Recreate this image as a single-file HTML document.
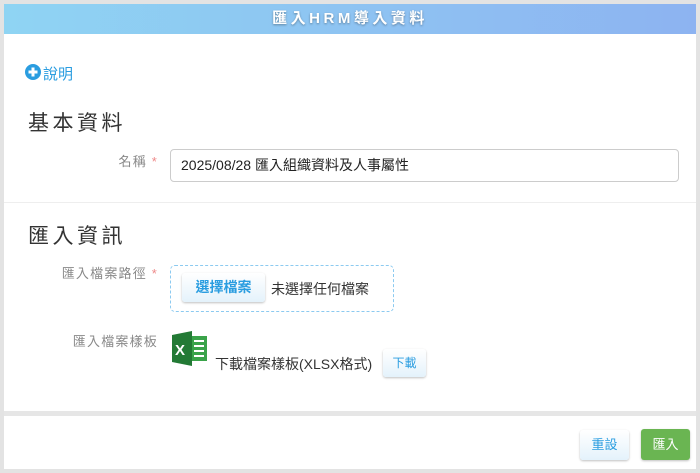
<!DOCTYPE html><html><head><meta charset="utf-8"><style>
body{margin:0;width:700px;height:473px;background:#e3e3e3;font-family:"Liberation Sans","Noto Sans CJK TC",sans-serif;position:relative;overflow:hidden}
.p{position:absolute}
#hd{left:4px;top:4px;width:692px;height:30px;background:linear-gradient(90deg,#8fd4f3,#8db3f1);color:#fff;font-weight:bold;font-size:15px;letter-spacing:3.5px;text-align:center;line-height:30px;text-shadow:0 1px 2px rgba(0,0,0,.35)}
#body{left:4px;top:34px;width:692px;height:377px;background:#fff}
#ft{left:4px;top:416px;width:692px;height:53px;background:#fff}
.lbl{color:#888;font-size:13px;letter-spacing:1.2px;text-align:right;width:154px;left:4px}
.star{color:#e88}
h2{margin:0;font-weight:normal;font-size:21px;letter-spacing:3.5px;color:#333;position:absolute;left:28px}
.btn{position:absolute;border-radius:3px;box-shadow:0 1px 2px rgba(0,0,0,.25);font-size:13px;text-align:center;background:linear-gradient(#fff,#e4f2fb);color:#2a9de0}
</style></head><body>
<div class="p" id="hd">匯入HRM導入資料</div>
<div class="p" id="body"></div>
<div class="p" style="left:4px;top:411px;width:692px;height:5px;background:#e6e6e6"></div>
<div class="p" id="ft"></div>
<svg class="p" style="left:25px;top:64px" width="16" height="16"><circle cx="8" cy="8" r="8" fill="#2a9de0"/><rect x="3.5" y="6.5" width="9" height="3" fill="#fff"/><rect x="6.5" y="3.5" width="3" height="9" fill="#fff"/></svg>
<div class="p" style="left:43px;top:63px;font-size:15px;color:#2a9de0">說明</div>
<h2 style="top:107px">基本資料</h2>
<div class="p lbl" style="top:151px">名稱 <span class="star">*</span></div>
<div class="p" style="left:170px;top:149px;border:1px solid #ccc;border-radius:4px;font-size:14px;line-height:31px;padding-left:10px;box-sizing:border-box;width:509px;height:33px;color:#222">2025/08/28 匯入組織資料及人事屬性</div>
<div class="p" style="left:4px;top:202px;width:692px;height:1px;background:#eee"></div>
<h2 style="top:220px">匯入資訊</h2>
<div class="p lbl" style="top:263px">匯入檔案路徑 <span class="star">*</span></div>
<div class="p" style="left:170px;top:265px;width:224px;height:47px;border:1px dashed #8ccaf0;border-radius:5px;box-sizing:border-box"></div>
<div class="btn" style="left:182px;top:273px;width:83px;height:29px;line-height:29px;font-weight:bold;font-size:14px">選擇檔案</div>
<div class="p" style="left:271px;top:279px;font-size:14px;color:#333">未選擇任何檔案</div>
<div class="p lbl" style="top:331px">匯入檔案樣板</div>
<svg class="p" style="left:172px;top:331px" width="36" height="35"><rect x="14" y="5" width="21" height="25" fill="#3aa34a"/><g fill="#fff"><rect x="22" y="9" width="10" height="2"/><rect x="22" y="14" width="10" height="2"/><rect x="22" y="19" width="10" height="2"/><rect x="22" y="24" width="10" height="2"/></g><path d="M0 4 L20 0 L20 35 L0 31Z" fill="#237a35"/><text x="3" y="24" font-size="15" font-weight="bold" fill="#fff" font-family="Liberation Sans">X</text></svg>
<div class="p" style="left:215px;top:354px;font-size:14px;color:#333">下載檔案樣板(XLSX格式)</div>
<div class="btn" style="left:383px;top:349px;width:43px;height:28px;line-height:28px;font-size:12px">下載</div>
<div class="btn" style="left:580px;top:430px;width:49px;height:30px;line-height:30px">重設</div>
<div class="btn" style="left:641px;top:429px;width:49px;height:31px;line-height:31px;background:#6ab552;color:#fff">匯入</div>
</body></html>
